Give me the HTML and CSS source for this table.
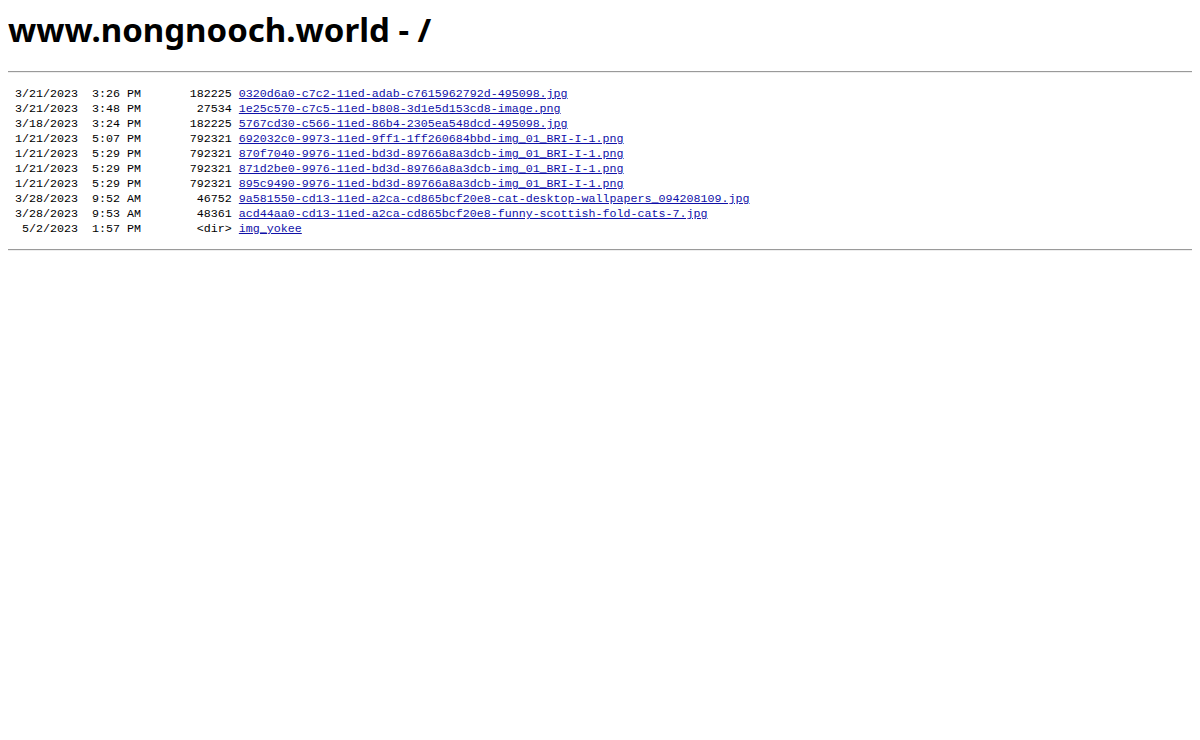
FILE: index.html
```html
<!DOCTYPE html>
<html>
<head>
<meta charset="utf-8">
<title>www.nongnooch.world - /</title>
<link rel="stylesheet" href="styles.css">
</head>
<body class="page">
<h1 class="title">www.nongnooch.world - /</h1>
<hr class="rule">
<pre class="listing"> 3/21/2023  3:26 PM       182225 <a class="entry" href="#">0320d6a0-c7c2-11ed-adab-c7615962792d-495098.jpg</a>
 3/21/2023  3:48 PM        27534 <a class="entry" href="#">1e25c570-c7c5-11ed-b808-3d1e5d153cd8-image.png</a>
 3/18/2023  3:24 PM       182225 <a class="entry" href="#">5767cd30-c566-11ed-86b4-2305ea548dcd-495098.jpg</a>
 1/21/2023  5:07 PM       792321 <a class="entry" href="#">692032c0-9973-11ed-9ff1-1ff260684bbd-img_01_BRI-I-1.png</a>
 1/21/2023  5:29 PM       792321 <a class="entry" href="#">870f7040-9976-11ed-bd3d-89766a8a3dcb-img_01_BRI-I-1.png</a>
 1/21/2023  5:29 PM       792321 <a class="entry" href="#">871d2be0-9976-11ed-bd3d-89766a8a3dcb-img_01_BRI-I-1.png</a>
 1/21/2023  5:29 PM       792321 <a class="entry" href="#">895c9490-9976-11ed-bd3d-89766a8a3dcb-img_01_BRI-I-1.png</a>
 3/28/2023  9:52 AM        46752 <a class="entry" href="#">9a581550-cd13-11ed-a2ca-cd865bcf20e8-cat-desktop-wallpapers_094208109.jpg</a>
 3/28/2023  9:53 AM        48361 <a class="entry" href="#">acd44aa0-cd13-11ed-a2ca-cd865bcf20e8-funny-scottish-fold-cats-7.jpg</a>
  5/2/2023  1:57 PM        &lt;dir&gt; <a class="entry" href="#">img_yokee</a>
</pre>
<hr class="rule">
</body>
</html>
```

FILE: styles.css
```css
html, body {
  background: #ffffff;
}

.page {
  margin: 8px;
  font-family: "Noto Sans", "Liberation Sans", sans-serif;
  color: #000000;
}

.title {
  margin: 0 0 19px 0;
  font-family: "Noto Sans", "Liberation Sans", sans-serif;
  font-size: 33px;
  line-height: 44px;
  font-weight: 700;
  color: #000000;
}

.rule {
  margin: 0;
  border: 0;
  border-top: 1px solid #9a9a9a;
  border-bottom: 1px solid #eeeeee;
  height: 0;
}

.listing {
  margin: 14px 0 12px 0;
  font-family: "Liberation Mono", monospace;
  font-size: 11.67px;
  line-height: 15px;
  color: #000000;
}

.entry {
  color: #1010a8;
  text-decoration: underline;
}
```
